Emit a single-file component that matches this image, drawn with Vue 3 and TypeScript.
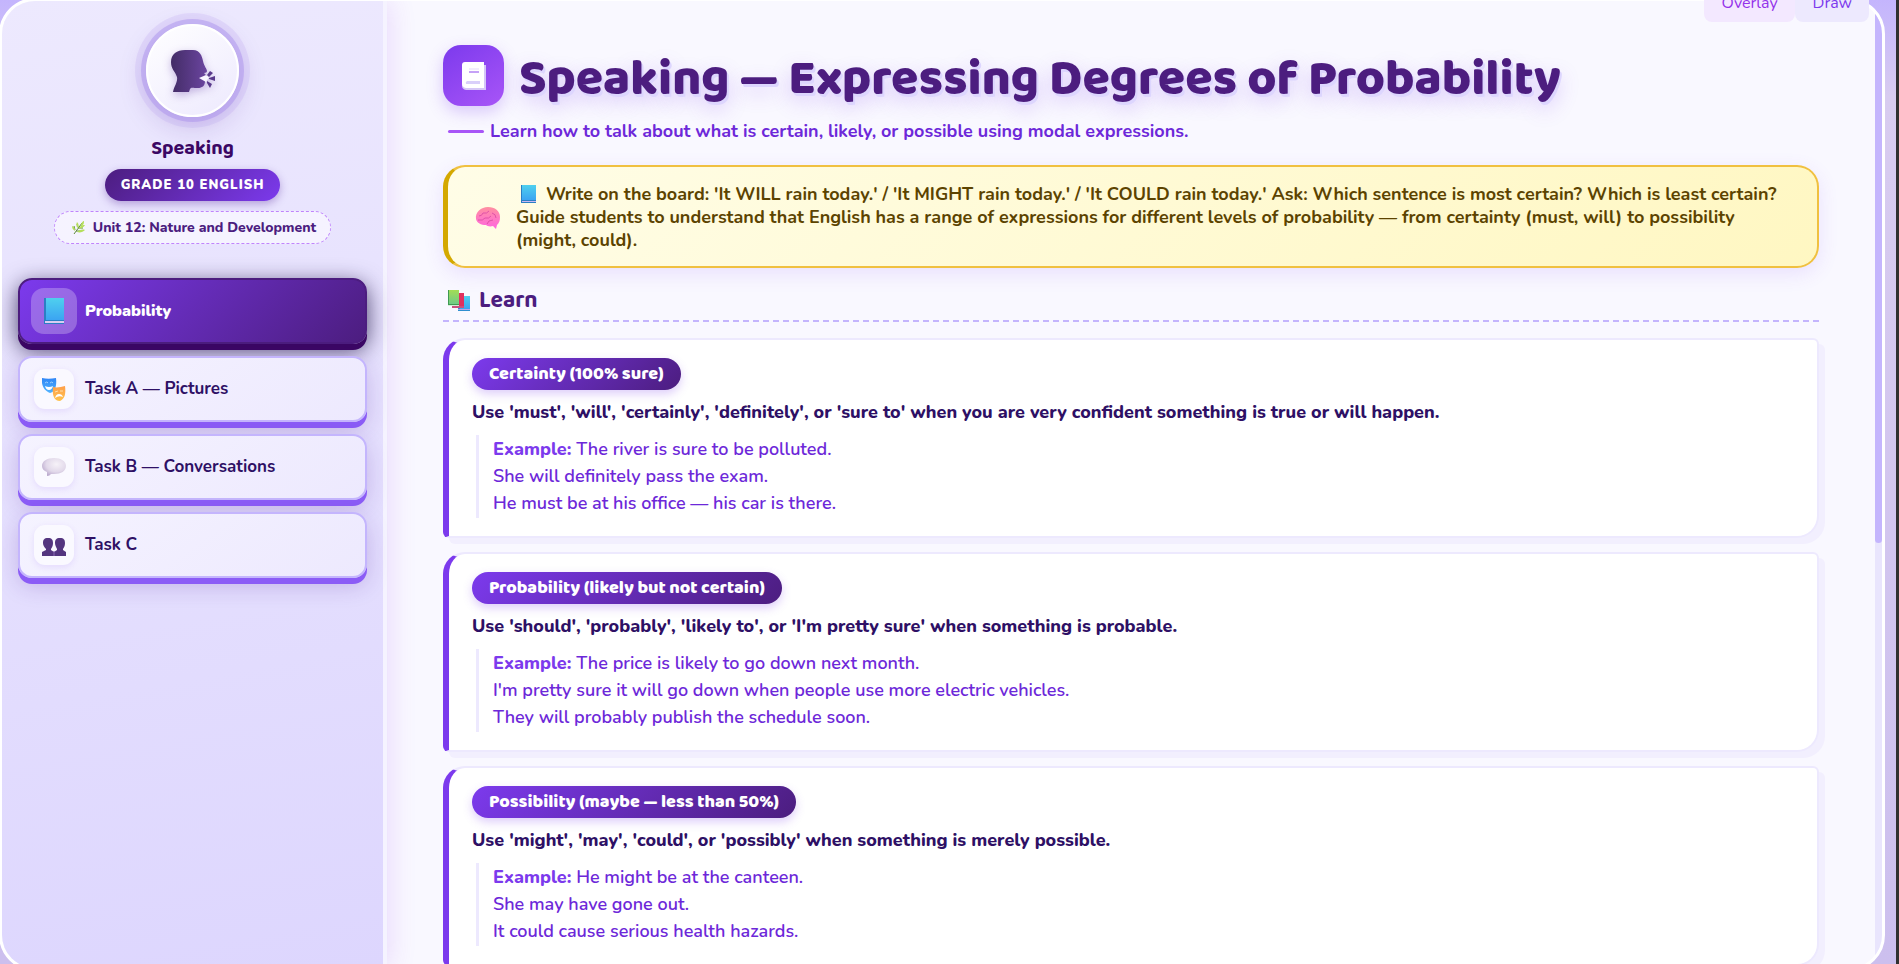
<script setup lang="ts">
import { ref } from 'vue'

interface NavItem { id: string; label: string }
interface Rule { title: string; use: string; examples: string[] }

const navItems: NavItem[] = [
  { id: 'book', label: 'Probability' },
  { id: 'masks', label: 'Task A — Pictures' },
  { id: 'speech', label: 'Task B — Conversations' },
  { id: 'people', label: 'Task C' },
]
const active = ref('book')

const rules: Rule[] = [
  {
    title: 'Certainty (100% sure)',
    use: "Use 'must', 'will', 'certainly', 'definitely', or 'sure to' when you are very confident something is true or will happen.",
    examples: ['The river is sure to be polluted.', 'She will definitely pass the exam.', 'He must be at his office — his car is there.'],
  },
  {
    title: 'Probability (likely but not certain)',
    use: "Use 'should', 'probably', 'likely to', or 'I'm pretty sure' when something is probable.",
    examples: ['The price is likely to go down next month.', "I'm pretty sure it will go down when people use more electric vehicles.", 'They will probably publish the schedule soon.'],
  },
  {
    title: 'Possibility (maybe — less than 50%)',
    use: "Use 'might', 'may', 'could', or 'possibly' when something is merely possible.",
    examples: ['He might be at the canteen.', 'She may have gone out.', 'It could cause serious health hazards.'],
  },
]
</script>

<template>
  <div class="page">
    <svg class="defs" width="0" height="0" aria-hidden="true">
      <defs>
        <linearGradient id="gBlue" x1="0" y1="0" x2="0" y2="1"><stop offset="0" stop-color="#4fd0ee" /><stop offset="1" stop-color="#3ba4f2" /></linearGradient>
        <linearGradient id="gHead" x1="0" y1="0" x2="1" y2="0"><stop offset="0" stop-color="#432c66" /><stop offset="1" stop-color="#6b45a0" /></linearGradient>
        <linearGradient id="gMaskA" x1="0" y1="0" x2="0" y2="1"><stop offset="0" stop-color="#2f86f6" /><stop offset="1" stop-color="#52b4ff" /></linearGradient>
        <linearGradient id="gMaskB" x1="0" y1="0" x2="0" y2="1"><stop offset="0" stop-color="#ff9f4a" /><stop offset="1" stop-color="#ffc34d" /></linearGradient>
        <radialGradient id="gSpeech" cx="0.6" cy="0.35" r="0.7"><stop offset="0" stop-color="#f6f2f8" /><stop offset="0.6" stop-color="#e2d9ea" /><stop offset="1" stop-color="#b9a8cc" /></radialGradient>
        <linearGradient id="gBrain" x1="0" y1="0" x2="0" y2="1"><stop offset="0" stop-color="#ff8fa0" /><stop offset="1" stop-color="#ff66e0" /></linearGradient>
        <linearGradient id="gGreen" x1="0" y1="0" x2="0" y2="1"><stop offset="0" stop-color="#a3dc55" /><stop offset="1" stop-color="#6fca86" /></linearGradient>
      </defs>
    </svg>

    <div class="shell">
      <aside class="sidebar">
        <div class="avatar">
          <svg width="46" height="44" viewBox="0 0 46 44" aria-hidden="true">
            <path fill="url(#gHead)" d="M1 13C1 5 7 1 15 1h8c7 0 9 6 10 11 1 5 4 8 4 10 0 1-1 2-3 2l3 3-2 5c0 5-3 7-7 7-5 0-7-1-8 1l-1 3H3c1-6 5-10 4-15C5 22 1 20 1 13z" />
            <path fill="#f8f5ff" d="m29 29 7-3 3 2-3 5z" />
            <path fill="#5a3a8c" d="m37 26 3-4 3 2-4 4zM39 29l6-2v5l-6-2zM37 32l5 3-2 4-3-5z" />
          </svg>
        </div>
        <h2 class="subject">Speaking</h2>
        <div class="grade">GRADE 10 ENGLISH</div>
        <div class="unit">
          <svg width="14" height="14" viewBox="0 0 14 14" aria-hidden="true">
            <path d="M2 13C5 9 7 6 10 2M4 10h6M6 7h5M3 9 2 5M6 6 5 3" stroke="#5f8a3a" fill="none" />
            <path fill="#b5df5c" d="M9 4c0-2 2-4 3-4 0 2 0 4-3 5zM7 7c2-3 4-3 6-3-1 2-3 3-6 4zM5 11c2-2 5-3 8-2-2 2-5 3-8 2zM3 10C1 9 0 7 0 5c3 1 3 3 3 5zM6 7C4 6 4 3 5 1c2 2 2 4 1 6z" />
          </svg>
          <span>Unit 12: Nature and Development</span>
        </div>

        <nav class="nav">
          <button v-for="item in navItems" :key="item.id" type="button" class="nav-item" :class="{ active: active === item.id }" @click="active = item.id">
            <span class="nav-icon">
              <svg v-if="item.id === 'book'" width="22" height="28" viewBox="0 0 22 28" aria-hidden="true">
                <path fill="#2b7fc4" d="M1 1h20v26H1z" /><path fill="url(#gBlue)" d="M3 1h18v22H3z" />
                <path fill="#d9cdf2" d="M2 24h19v2H2z" />
              </svg>
              <svg v-else-if="item.id === 'masks'" width="24" height="24" viewBox="0 0 24 24" aria-hidden="true">
                <path fill="url(#gMaskA)" d="M0 1c4 1 9 1 14 0 1 8-1 14-6 15C2 14-1 8 0 1z" />
                <path d="M3 6q2-2 3 0M8 6q2-2 3 0" stroke="#9fd0ff" fill="none" /><path fill="#fff" d="M3 9q4 2 8 0-1 4-4 4T3 9z" />
                <path fill="url(#gMaskB)" d="M11 10c4 1 8 0 12-1 1 7 0 13-5 15-6 0-8-6-7-14z" />
                <path d="m13 15 3-1M18 14l3 0" stroke="#ffe0a8" fill="none" /><path fill="#fff" d="M13 21q1-4 4-4t4 3q-4-2-8 1z" />
              </svg>
              <svg v-else-if="item.id === 'speech'" width="24" height="20" viewBox="0 0 24 20" aria-hidden="true">
                <path fill="url(#gSpeech)" d="M12 1c7 0 12 3 12 8s-5 8-12 8H9c-1 1-2 2-4 2v-4C2 14 0 12 0 9c0-5 5-8 12-8z" />
              </svg>
              <svg v-else class="people" width="24" height="20" viewBox="0 0 24 20" aria-hidden="true">
                <path fill="#54357f" d="M6 1c4 0 5 2 5 5s-1 4-2 6v1l3 2v4H0v-4l4-2v-1C2 10 1 8 1 6c0-3 1-5 5-5z" />
                <path fill="#54357f" d="M18 1c4 0 5 2 5 5s-1 4-2 6v1l3 2v4H12v-4l3-2v-1c-1-2-2-4-2-6 0-3 1-5 5-5z" />
                <path d="M12 14v5" stroke="#8a6bb5" />
              </svg>
            </span>
            <span>{{ item.label }}</span>
          </button>
        </nav>
      </aside>

      <main class="main">
        <header class="head">
          <div class="title-row">
            <span class="title-icon">
              <svg width="26" height="30" viewBox="0 0 26 30" aria-hidden="true">
                <path fill="#d5c6f7" d="M5 4h20v25H5q-4-1-4-4z" /><path fill="#fff" d="M4 1h19v26H5q-4-1-4-4V4q0-3 3-3z" />
                <path d="M8 8h10" stroke="#e3dafb" /><path d="M8 11h10" stroke="#8b45ee" /><path fill="#d9cffa" d="M6 20h13v3H5q-1-2 1-3z" />
              </svg>
            </span>
            <h1>Speaking — Expressing Degrees of Probability</h1>
          </div>
          <p class="subtitle">Learn how to talk about what is certain, likely, or possible using modal expressions.</p>
        </header>

        <section class="note">
          <svg class="brain" width="26" height="24" viewBox="0 0 26 24" aria-hidden="true">
            <path fill="url(#gBrain)" d="M1 13C0 6 6 1 13 1s12 4 12 10c0 4-1 6-3 8l-1 4-3-3c-3 1-6 0-7-1-5 0-9-2-10-6z" />
            <path d="M4 10q3 0 4-3 4 1 6-2M3 14q5 1 7-2 4 1 6-2M12 18q1-4 6-4M17 7q4 1 4 5" stroke="#e052a8" fill="none" />
          </svg>
          <p>
            <svg class="note-book" width="15" height="18" viewBox="0 0 15 18" aria-hidden="true">
              <path fill="#2b7fc4" d="M0 0h15v18H0z" /><path fill="url(#gBlue)" d="M1 0h14v15H1z" /><path fill="#c9b8f2" d="M1 16h14v1H1z" />
            </svg>
            Write on the board: 'It WILL rain today.' / 'It MIGHT rain today.' / 'It COULD rain today.' Ask: Which sentence is most certain? Which is least certain? Guide students to understand that English has a range of expressions for different levels of probability — from certainty (must, will) to possibility (might, could).
          </p>
        </section>

        <h2 class="section-title">
          <svg width="24" height="22" viewBox="0 0 24 22" aria-hidden="true">
            <path fill="#2f8fd0" d="M11 7h12v14H11z" /><path fill="url(#gBlue)" d="M13 6h10v13H13z" /><path fill="#b9a6ea" d="M11 19h12v1H11z" />
            <path fill="#e0305f" d="M7 3h10v13H7z" /><path fill="#c9507f" d="M5 16h12v2H5z" />
            <path fill="#3f9a52" d="M1 0h11v16H1z" /><path fill="url(#gGreen)" d="M2 0h10v14H2z" /><path fill="#d5ecd8" d="M1 15h11v1H1z" />
          </svg>
          <span>Learn</span>
        </h2>

        <div class="cards">
          <article v-for="rule in rules" :key="rule.title" class="card">
            <h3>{{ rule.title }}</h3>
            <p class="use">{{ rule.use }}</p>
            <div class="examples">
              <div v-for="(line, i) in rule.examples" :key="line"><strong v-if="i === 0">Example:</strong> {{ line }}</div>
            </div>
          </article>
        </div>
      </main>
      <div class="track" aria-hidden="true"><div class="thumb"></div></div>
    </div>

    <div class="tools">
      <button type="button" class="tool overlay">Overlay</button>
      <button type="button" class="tool draw">Draw</button>
    </div>
  </div>
</template>

<style>
body { background: #f9f8ff; }
</style>

<style scoped>
* { box-sizing: border-box; }
h1, h2, h3, p { margin: 0; }
h1, h2, h3 { font-family: "Baloo 2", "Nunito", "Lato", sans-serif; }
.page {
  position: relative;
  height: 100vh;
  overflow: hidden;
  padding-right: 11px;
  border-right: 3px solid #303030;
  background: linear-gradient(180deg, #c4b5fd 0%, #d8ccf0 10%, #ccbfee 100%);
  font-family: "Nunito", "Lato", sans-serif;
}
.defs { position: absolute; }
.shell {
  display: flex;
  height: calc(100vh + 9px);
  margin: -2px 0 0 -1px;
  border: 3px solid #fff;
  border-radius: 36px;
  overflow: hidden;
  background: #f9f8ff;
}
.sidebar {
  flex: none;
  width: 385px;
  padding: 23px 16px 0;
  display: flex;
  flex-direction: column;
  align-items: center;
  border-right: 4px solid #f5f3ff;
  background: linear-gradient(170deg, #ede9fe, #ddd6fe);
  box-shadow: 4px 0 24px rgba(147, 51, 234, 0.14);
  z-index: 1;
}
.avatar {
  flex: none;
  width: 93px;
  height: 93px;
  display: grid;
  place-items: center;
  border: 2px solid #fff;
  border-radius: 50%;
  background: linear-gradient(145deg, #fff, #ede9fe);
  box-shadow: 0 0 0 5px rgba(167, 139, 235, 0.45), 0 0 0 11px rgba(167, 139, 235, 0.16), 0 8px 28px rgba(76, 29, 149, 0.22);
}
.avatar svg { filter: drop-shadow(0 3px 4px rgba(76, 29, 149, 0.3)); }
.subject { margin-top: 18px; font-size: 20px; line-height: 26px; font-weight: 700; color: #3b0764; }
.grade {
  margin-top: 8px;
  padding: 0 16px;
  border-radius: 16px;
  font-size: 13px;
  line-height: 32px;
  font-weight: 900;
  letter-spacing: 1px;
  color: #fff;
  background: linear-gradient(135deg, #4c1d7f, #7c3aed);
  box-shadow: 0 3px 8px rgba(76, 29, 149, 0.35);
}
.unit {
  margin-top: 10px;
  height: 33px;
  padding: 0 14px 0 17px;
  display: flex;
  align-items: center;
  gap: 7px;
  border: 1px dashed #c084fc;
  border-radius: 17px;
  background: rgba(255, 255, 255, 0.55);
  font-size: 14px;
  font-weight: 800;
  color: #4c1d7f;
}
.nav { width: 100%; margin-top: 34px; display: flex; flex-direction: column; gap: 12px; }
.nav-item {
  display: flex;
  align-items: center;
  gap: 11px;
  height: 66px;
  padding: 0 14px;
  border: 2px solid #c4b5fd;
  border-radius: 14px;
  background: linear-gradient(145deg, #f5f3ff, #ede9fe);
  box-shadow: 0 6px 0 #8b5cf6, 0 8px 22px rgba(76, 29, 149, 0.22);
  font: 700 17px/22px "Nunito", "Lato", sans-serif;
  color: #2e1065;
  text-align: left;
  cursor: pointer;
}
.nav-icon {
  width: 40px;
  height: 40px;
  display: grid;
  place-items: center;
  border-radius: 11px;
  background: #faf9ff;
  box-shadow: 0 2px 6px rgba(124, 58, 237, 0.12);
}
.people { margin-top: 4px; }
.nav-item.active {
  padding: 0 11px;
  gap: 8px;
  border-color: #4c1d7f;
  background: linear-gradient(135deg, #7c3aed, #4c1d7f);
  box-shadow: 0 6px 0 #3b0764, 0 6px 22px rgba(20, 8, 60, 0.75);
  color: #fff;
  font-size: 16px;
  font-weight: 900;
}
.active .nav-icon { width: 46px; height: 46px; border-radius: 13px; background: rgba(255, 255, 255, 0.26); box-shadow: none; }
.main { flex: 1; min-width: 0; padding: 44px 56px 0; }
.title-row { display: flex; align-items: center; gap: 15px; height: 61px; }
.title-icon {
  flex: none;
  width: 61px;
  height: 61px;
  display: grid;
  place-items: center;
  border-radius: 18px;
  background: linear-gradient(145deg, #7c3aed, #a855f7);
  box-shadow: 0 6px 16px rgba(124, 58, 237, 0.25);
}
h1 {
  padding-top: 7px;
  font-size: 50px;
  line-height: 60px;
  font-weight: 800;
  color: #4c1d7f;
  text-shadow: 2px 3px 0 #ddd6fe, 0 8px 20px rgba(124, 58, 237, 0.25);
  white-space: nowrap;
}
.subtitle {
  margin: 12px 0 0 5px;
  display: flex;
  align-items: center;
  gap: 6px;
  font-size: 18px;
  line-height: 26px;
  font-weight: 700;
  color: #6d28d9;
}
.subtitle::before { content: ""; width: 36px; height: 3px; border-radius: 2px; background: #a855f7; }
.note {
  margin-top: 21px;
  padding: 16px 36px 14px 27px;
  display: flex;
  align-items: center;
  gap: 15px;
  border: 2px solid #f0c040;
  border-left: 5px solid #d4a800;
  border-radius: 22px;
  background: linear-gradient(135deg, #fffde7, #fff7c2);
  box-shadow: 0 6px 20px rgba(124, 58, 237, 0.12);
}
.brain { flex: none; }
.note p { font-size: 18px; line-height: 23px; font-weight: 700; color: #5c4300; }
.note-book { vertical-align: -3px; margin: 0 5px; }
.section-title {
  margin-top: 16px;
  padding: 3px 4px 5px;
  display: flex;
  align-items: center;
  gap: 8px;
  border-bottom: 2px dashed #c4b5fd;
  font-size: 23px;
  line-height: 28px;
  font-weight: 700;
  color: #4c1d7f;
}
.cards { margin-top: 16px; display: flex; flex-direction: column; gap: 14px; }
.card {
  padding: 18px 23px;
  border: 2px solid #ede9fe;
  border-left: 6px solid #7c3aed;
  border-radius: 22px 6px 22px 6px;
  background: #fff;
  box-shadow: 6px 6px 0 #f2effe;
}
h3 {
  width: fit-content;
  padding: 0 17px;
  border-radius: 16px;
  font-size: 18px;
  line-height: 32px;
  font-weight: 800;
  color: #fff;
  background: linear-gradient(135deg, #7c3aed, #4c1d7f);
  box-shadow: 0 4px 10px rgba(124, 58, 237, 0.25);
}
.use { margin-top: 9px; font-size: 18px; line-height: 26px; font-weight: 800; color: #2e1065; }
.examples {
  margin: 10px 0 0 4px;
  padding: 1px 0 1px 14px;
  border-left: 3px solid #ede9fe;
  font-size: 18px;
  line-height: 27px;
  font-weight: 600;
  color: #6d28d9;
}
.examples strong { font-weight: 800; color: #7c3aed; }
.track { flex: none; width: 7px; background: #e9e5fd; }
.thumb { height: 56%; border-radius: 4px; background: #c4b5fd; }
.tools { position: absolute; top: -16px; right: 27px; display: flex; }
.tool {
  height: 38px;
  padding: 0 17px 0 18px;
  border: 0;
  border-radius: 8px;
  font: 400 16px/38px "Nunito", "Lato", sans-serif;
}
.overlay { background: #f3e8ff; color: #9333ea; }
.draw { background: #ede9fe; color: #7c3aed; }
</style>
